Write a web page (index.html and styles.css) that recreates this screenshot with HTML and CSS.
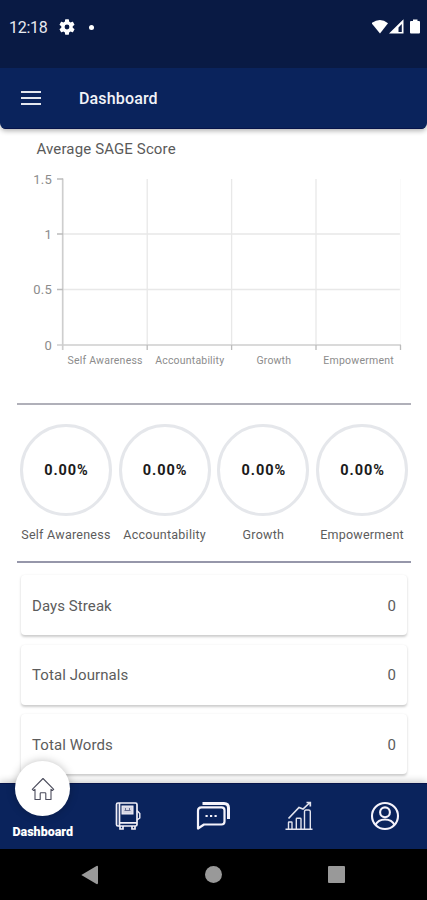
FILE: index.html
```html
<!DOCTYPE html>
<html lang="en">
<head>
<meta charset="utf-8">
<title>Dashboard</title>
<link rel="stylesheet" href="styles.css">
</head>
<body>
<div class="screen">
  <header class="top">
    <div class="status">
      <span class="clock">12:18</span>
      <svg class="gear" width="16" height="16" viewBox="2 2 20 20"><path fill="#fff" d="M19.14 12.94c.04-.3.06-.61.06-.94s-.02-.64-.07-.94l2.03-1.58a.5.5 0 0 0 .12-.61l-1.92-3.32a.49.49 0 0 0-.59-.22l-2.39.96c-.5-.38-1.03-.7-1.62-.94l-.36-2.54a.48.48 0 0 0-.48-.41h-3.84a.47.47 0 0 0-.47.41l-.36 2.54c-.59.24-1.13.57-1.62.94l-2.39-.96a.48.48 0 0 0-.59.22L2.74 8.87a.48.48 0 0 0 .12.61l2.03 1.58a6 6 0 0 0 0 1.88l-2.03 1.58a.5.5 0 0 0-.12.61l1.92 3.32c.12.22.37.29.59.22l2.39-.96c.5.38 1.03.7 1.62.94l.36 2.54c.05.24.24.41.48.41h3.84c.24 0 .44-.17.47-.41l.36-2.54c.59-.24 1.13-.56 1.62-.94l2.39.96c.22.08.47 0 .59-.22l1.92-3.32a.48.48 0 0 0-.12-.61zM12 15a3 3 0 1 1 0-6 3 3 0 0 1 0 6z"/></svg>
      <i class="dot"></i>
      <svg class="signals" width="50" height="16" viewBox="0 0 50 16" fill="#fff">
        <path d="M-.5 4.200Q8-2.200 16 4.200L8 14.500Z"/>
        <path fill-rule="evenodd" d="M17 14.500L31.500 .2V14.500ZM26.500 13H29.800V5L26.500 8.400Z"/>
        <path d="M38 3Q38 2 39 2H41V.5H45.500V2H47Q48 2 48 3V13.500Q48 14.500 47 14.500H39Q38 14.500 38 13.500Z"/>
      </svg>
    </div>
    <div class="appbar">
      <div class="menu"><i></i><i></i><i></i></div>
      <h1>Dashboard</h1>
    </div>
  </header>

  <main>
    <h2>Average SAGE Score</h2>
    <svg class="chart" width="427" height="210" viewBox="0 160 427 210">
      <g stroke="#e8e8e8" stroke-width="1.300">
        <path d="M63 234H401M63 289.500H401M147.200 179V345M231.600 179V345M316 179V345"/>
        <path stroke="#fafafa" d="M400.500 179V345"/>
      </g>
      <path stroke="#cecece" stroke-width="1.700" fill="none" d="M62.700 178.500V350M57 345H401"/>
      <path stroke="#bcbcbc" stroke-width="1.300" d="M57 179H63M57 234H63M57 289.500H63M147.200 345V350M231.600 345V350M316 345V350M400.500 345V350"/>
      <g class="ylab">
        <text x="52" y="183.500">1.5</text><text x="52" y="238.500">1</text><text x="52" y="294">0.5</text><text x="52" y="349.500">0</text>
      </g>
      <g class="xlab">
        <text x="105" y="363.500" textLength="75">Self Awareness</text><text x="189.700" y="363.500" textLength="69">Accountability</text><text x="273.700" y="363.500" textLength="34.500">Growth</text><text x="358.500" y="363.500" textLength="70.500">Empowerment</text>
      </g>
    </svg>
    <section class="scores">
      <div class="score"><div class="ring">0.00%</div><span>Self Awareness</span></div>
      <div class="score"><div class="ring">0.00%</div><span>Accountability</span></div>
      <div class="score"><div class="ring">0.00%</div><span>Growth</span></div>
      <div class="score"><div class="ring">0.00%</div><span>Empowerment</span></div>
    </section>
    <section class="cards">
      <div class="card"><span>Days Streak</span><b>0</b></div>
      <div class="card"><span>Total Journals</span><b>0</b></div>
      <div class="card"><span>Total Words</span><b>0</b></div>
    </section>
  </main>

  <nav class="tabs">
    <div class="tab active">
      <div class="bubble"><svg width="24" height="24" viewBox="0 0 24 24" fill="none" stroke="#4b4c5c" stroke-width="1.100" stroke-linejoin="round"><path d="M1.300 12.300L12 1.500L22.700 12.300L21.300 13.500L20 12.400V22.500H14.800V16.500Q14.800 15.700 14 15.700H10Q9.200 15.700 9.200 16.500V22.500H4V12.400L2.700 13.500Z"/></svg></div>
      <span>Dashboard</span>
    </div>
    <div class="tab"><svg width="28" height="30" viewBox="0 0 28 30" fill="none" stroke="#f1eff8" stroke-width="1.700"><path d="M4 2H21.500Q23 2 23 3.500V23.500Q23 25 21.500 25H4Q2.500 25 2.500 23.500V3.500Q2.500 2 4 2ZM5.500 2V25M5.500 21.800H23M6 25V28H9V25M18 25V28H21V25"/><path stroke-width="1.400" d="M23 9.500L25.800 12.500V17L23 19"/><rect x="8" y="5" width="11" height="8" fill="#d5d5e3" stroke-width="1"/><path stroke="#5a6289" stroke-width=".9" d="M10.500 9.500H16.500M11.500 7V9M15.500 7V9"/></svg></div>
    <div class="tab"><svg width="36" height="30" viewBox="0 0 36 30" fill="none" stroke="#f5f3fb"><path stroke-width="3" d="M6.500 2.500H28Q32.500 2.500 32.500 7V18"/><path stroke-width="2.200" stroke-linejoin="round" d="M5.500 6.300H25.500Q28.500 6.300 28.500 9.300V20.500Q28.500 23.500 25.500 23.500H8L2 27.500V9.800Q2 6.300 5.500 6.300Z"/><path stroke-width="1.800" d="M9.500 15H11.700M14 15H16.200M18.500 15H20.700"/></svg></div>
    <div class="tab"><svg width="28" height="30" viewBox="0 0 28 30" fill="none" stroke="#e2e3ed" stroke-width="1.400"><path d="M.5 28.300H27.500M3.500 28V21.500Q3.500 21 4 21H6.500Q7 21 7 21.500V28M11.300 28V18Q11.300 17.300 12 17.300H15Q16 17.300 16 18V28M19.500 28V10.500Q19.500 9 21 9H23.500Q25.300 9 25.300 10.500V28"/><path stroke-width="1.700" d="M3.500 17.500L14 6.500L18 8L25 1.500M21.500 1.500H25.300V5.500"/></svg></div>
    <div class="tab"><svg width="30" height="30" viewBox="0 0 30 30" fill="none" stroke="#f5f3fb" stroke-width="2.100"><circle cx="15" cy="15" r="13"/><circle cx="15" cy="11.300" r="4.900"/><path d="M5.500 24Q8 18.500 15 18.500T24.500 24"/></svg></div>
  </nav>
  <footer class="system">
    <svg width="18" height="20" viewBox="0 0 18 20"><path fill="#999" d="M.3 10L15.500 1Q17 .3 17 2V18Q17 19.500 15.500 19Z"/></svg>
    <i class="home"></i>
    <i class="recent"></i>
  </footer>
</div>
</body>
</html>
```
FILE: styles.css
```css
* { box-sizing: border-box; }
body { margin: 0; background: #fff; font-family: Roboto, "Liberation Sans", sans-serif; color: #4a4a4a; }
.screen { width: 427px; height: 900px; overflow: hidden; display: flex; flex-direction: column; }
svg { display: block; flex: none; }
.top { height: 129px; flex: none; border-radius: 0 0 6px 6px; overflow: hidden; background: #0a235c; box-shadow: 0 2px 5px rgba(0, 0, 0, .3); }
.status { height: 68px; background: #091a44; display: flex; align-items: center; padding: 0 5px 14px 9px; }
.clock { color: #e8eaf0; font-size: 16px; width: 50px; letter-spacing: -.3px; padding-top: 1px; }
.dot { width: 5px; height: 5px; border-radius: 50%; background: #fff; margin-left: 14px; }
.signals { margin-left: auto; }
.appbar { height: 61px; border-bottom: 1px solid #06134a; display: flex; align-items: center; padding-left: 21px; }
.menu { width: 20px; display: grid; gap: 3.500px; }
.menu i { height: 2.500px; background: #e4e7ef; }
h1 { margin: 0 0 0 38px; color: #f2f3f8; font-size: 16px; font-weight: 500; letter-spacing: .15px; }
main { flex: none; height: 654px; }
h2 { margin: 0; height: 31px; padding: 9.500px 0 0 36.500px; font-size: 15px; line-height: 20px; font-weight: 400; letter-spacing: .13px; color: #5a5a5a; }
.ylab { font-size: 13px; fill: #8c8c8c; text-anchor: end; letter-spacing: .2px; }
.xlab { font-size: 10.500px; fill: #8c8c8c; text-anchor: middle; }
.scores { margin: 33px 16px 0 17px; height: 160px; border-top: 2px solid #b0b0b9; border-bottom: 2px solid #9697aa; display: grid; grid-template-columns: repeat(4, 98.700px); justify-content: center; padding-top: 19px; }
.score { display: flex; flex-direction: column; align-items: center; font-size: 12.500px; color: #5c5c5c; white-space: nowrap; letter-spacing: .25px; }
.score span { margin-top: 11px; line-height: 16px; }
.ring { width: 92px; height: 92px; border: 3px solid #e5e7eb; border-radius: 50%; display: grid; place-items: center; color: #1b1b1b; font-size: 14.500px; font-weight: 700; letter-spacing: .95px; padding-left: 1px; }
.cards { padding: 12px 20px 0 21px; display: grid; gap: 9.500px; }
.card { height: 60px; border-radius: 4px; background: #fff; box-shadow: 0 1.500px 2.500px rgba(0, 0, 0, .2); display: flex; align-items: center; justify-content: space-between; padding: 1px 11px 0; font-size: 15px; letter-spacing: .08px; color: #5c5c5c; }
.card b { font-weight: 400; }
.tabs { position: relative; z-index: 1; flex: none; height: 66px; background: #0a235c; border-top: 1px solid #07144a; display: grid; grid-template-columns: repeat(5, 85.500px); box-shadow: 0 -2px 7px rgba(0, 0, 0, .2); }
.tab { display: flex; justify-content: center; padding-top: 17px; }
.active { flex-direction: column; align-items: center; justify-content: flex-start; padding: 0; color: #fff; font-size: 12.500px; font-weight: 900; }
.bubble { width: 55px; height: 55px; flex: none; margin-top: -23px; border-radius: 50%; background: #fff; display: grid; place-items: center; box-shadow: 0 0 8px rgba(0, 0, 0, .25); }
.active span { margin-top: 8px; line-height: 16px; }
.system { flex: none; height: 51px; background: #000; display: flex; align-items: center; padding-left: 81px; }
.home { width: 17px; height: 17px; border-radius: 50%; background: #999; margin-left: 106px; }
.recent { width: 17px; height: 17px; background: #999; margin-left: 106px; border-radius: 1px; }
```
